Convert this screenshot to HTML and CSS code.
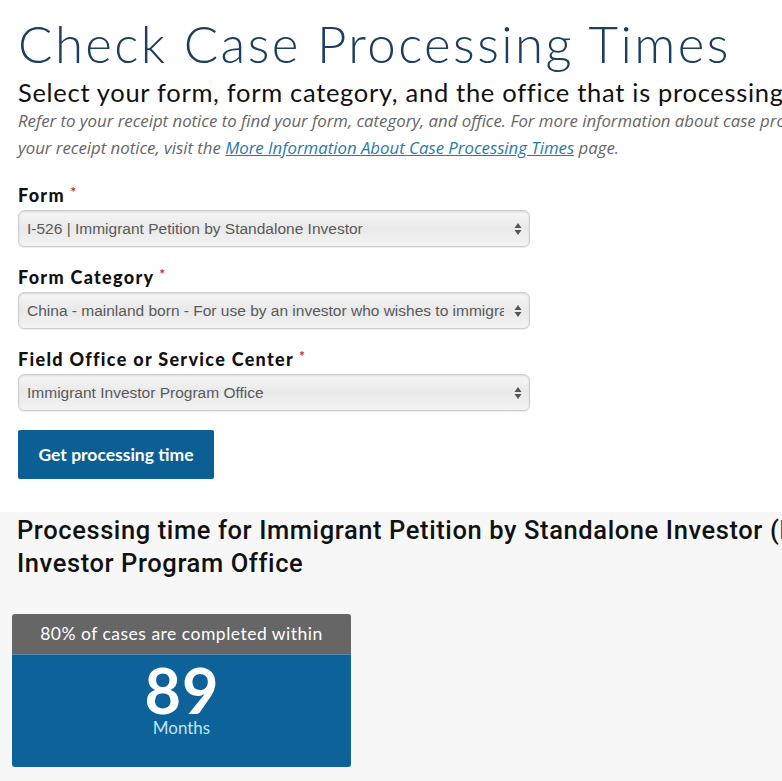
FILE: index.html
```html
<!DOCTYPE html>
<html lang="en">
<head>
<meta charset="utf-8">
<title>Check Case Processing Times</title>
<link rel="stylesheet" href="styles.css">
</head>
<body>
<main class="page">
  <section class="intro">
    <h1 class="title">Check Case Processing Times</h1>
    <p class="subtitle">Select your form, form category, and the office that is processing your case</p>
    <p class="note">Refer to your receipt notice to find your form, category, and office. For more information about case processing and how to read<br>your receipt notice, visit the <a href="#" class="link">More Information About Case Processing Times</a> page.</p>
  </section>

  <form class="form">
    <div class="field">
      <label class="label">Form <span class="req">*</span></label>
      <div class="select">
        <span class="select-text">I-526 | Immigrant Petition by Standalone Investor</span>
        <svg class="arrows" width="8" height="14" viewBox="0 0 8 14"><path d="M4 1 L7.5 6 H0.5 Z M4 13 L7.5 8 H0.5 Z" fill="#555"/></svg>
      </div>
    </div>
    <div class="field">
      <label class="label">Form Category <span class="req">*</span></label>
      <div class="select">
        <span class="select-text">China - mainland born - For use by an investor who wishes to immigrate</span>
        <svg class="arrows" width="8" height="14" viewBox="0 0 8 14"><path d="M4 1 L7.5 6 H0.5 Z M4 13 L7.5 8 H0.5 Z" fill="#555"/></svg>
      </div>
    </div>
    <div class="field">
      <label class="label">Field Office or Service Center <span class="req">*</span></label>
      <div class="select">
        <span class="select-text">Immigrant Investor Program Office</span>
        <svg class="arrows" width="8" height="14" viewBox="0 0 8 14"><path d="M4 1 L7.5 6 H0.5 Z M4 13 L7.5 8 H0.5 Z" fill="#555"/></svg>
      </div>
    </div>
    <button type="button" class="btn">Get processing time</button>
  </form>

  <section class="result">
    <h2 class="result-title">Processing time for Immigrant Petition by Standalone Investor (I-526) at Immigrant<br>Investor Program Office</h2>
    <div class="card">
      <div class="card-head">80% of cases are completed within</div>
      <div class="card-body">
        <div class="num">89</div>
        <div class="unit">Months</div>
      </div>
    </div>
  </section>
</main>
</body>
</html>
```

FILE: styles.css
```css
html, body {
  margin: 0;
  padding: 0;
  overflow: hidden;
  background: #fff;
}
body {
  font-family: "Lato", "Open Sans", sans-serif;
  color: #111;
  width: 782px;
  height: 781px;
}
.page {
  display: flex;
  flex-direction: column;
}
.intro {
  padding: 0 0 0 18px;
  white-space: nowrap;
}
.title {
  margin: 14px 0 0 0;
  font-weight: 300;
  font-size: 51px;
  line-height: 60px;
  color: #1c3e61;
  letter-spacing: 2.4px;
}
.subtitle {
  margin: 3px 0 0 0;
  font-size: 25.5px;
  font-weight: 400;
  line-height: 30px;
  letter-spacing: 0.7px;
  color: #111;
}
.note {
  margin: 0;
  font-family: "Open Sans", sans-serif;
  font-style: italic;
  font-size: 16.8px;
  line-height: 27px;
  color: #666;
}
.link {
  color: #2a7aa8;
  text-decoration: underline;
}
.form {
  padding: 19px 0 0 18px;
  display: flex;
  flex-direction: column;
  align-items: flex-start;
}
.field {
  display: flex;
  flex-direction: column;
  margin-bottom: 15px;
}
.label {
  font-weight: 900;
  font-size: 18px;
  line-height: 24px;
  letter-spacing: 1.3px;
  color: #111;
  margin-bottom: 3px;
}
.req {
  color: #c9302c;
  font-size: 13px;
  vertical-align: 5px;
}
.select {
  box-sizing: border-box;
  width: 512px;
  height: 37px;
  border: 1px solid #cfcfcf;
  border-radius: 6px;
  background: linear-gradient(#f6f6f6, #e9e9e9 50%, #f3f3f3);
  box-shadow: inset 0 1px 2px rgba(0,0,0,0.12), 0 1px 1px rgba(0,0,0,0.08);
  display: flex;
  align-items: center;
  justify-content: space-between;
  padding: 0 7px 0 8px;
  font-family: "Liberation Sans", Arial, sans-serif;
  font-size: 15.5px;
  color: #5a5a5a;
  overflow: hidden;
}
.select-text {
  white-space: nowrap;
  overflow: hidden;
  flex: 1;
  margin-right: 10px;
}
.arrows {
  flex: none;
}
.btn {
  margin-top: 4px;
  width: 196px;
  height: 49px;
  border: 0;
  border-radius: 2px;
  background: #0c5f95;
  color: #fff;
  font-family: "Lato", sans-serif;
  font-weight: 700;
  font-size: 17.5px;
  padding: 0;
}
.result {
  margin-top: 33px;
  background: #f7f7f7;
  padding: 0 0 40px 0;
  flex: 1;
  min-height: 300px;
}
.result-title {
  margin: 0;
  padding: 2px 0 0 17px;
  white-space: nowrap;
  font-family: "Roboto", sans-serif;
  font-weight: 500;
  font-size: 25.5px;
  line-height: 33px;
  color: #111;
  letter-spacing: 0.6px;
}
.card {
  margin: 34px 0 0 12px;
  width: 339px;
  border-radius: 3px;
  overflow: hidden;
}
.card-head {
  background: #666;
  color: #fff;
  text-align: center;
  font-size: 17.5px;
  letter-spacing: 0.5px;
  line-height: 40px;
  height: 40px;
  border-bottom: 1px solid #5a87ad;
}
.card-body {
  background: #0d6399;
  height: 112px;
  display: flex;
  flex-direction: column;
  align-items: center;
  padding-top: 7px;
  box-sizing: border-box;
}
.num {
  font-weight: 700;
  font-size: 63px;
  line-height: 56px;
  letter-spacing: 1px;
  padding-left: 1px;
  color: #fff;
}
.unit {
  font-size: 17px;
  line-height: 20px;
  color: #bfe4f6;
}
```
